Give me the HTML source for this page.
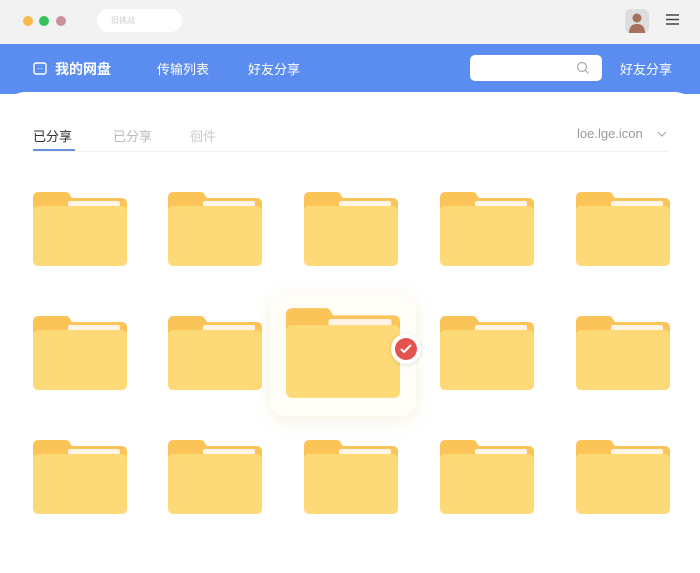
<!DOCTYPE html>
<html><head><meta charset="utf-8"><style>
body{margin:0;width:700px;height:573px;overflow:hidden;background:#fff;font-family:"Liberation Sans","Noto Sans CJK SC",sans-serif;position:relative}
.top{position:absolute;left:0;top:0;width:700px;height:44px;background:#f2f2f2}
.dot{position:absolute;top:16px;width:10px;height:10px;border-radius:50%}
.nav{position:absolute;left:0;top:44px;width:700px;height:50px;background:#5b8df0;color:#fff;font-size:13px}
.nav span{position:absolute;top:15px}
.main{position:absolute;left:0;top:92px;width:700px;height:481px;background:#fff;border-radius:26px 26px 0 0}
.f{position:absolute;width:94px;height:74px}
.tab{position:absolute;top:34px;font-size:13px}
</style></head><body>
<svg width="0" height="0" style="position:absolute"><defs>
<symbol id="fd" viewBox="0 0 94 74">
<path d="M0 5a5 5 0 0 1 5-5h28a5 5 0 0 1 4 3l2 3h50a5 5 0 0 1 5 5v50H0z" fill="#fbc458"/>
<rect x="35" y="9" width="52" height="12" rx="2" fill="#fdf4e6"/>
<rect x="0" y="14" width="94" height="60" rx="5" fill="#fdd977"/>
</symbol></defs></svg>
<div class="top">
<div class="dot" style="left:23px;background:#f9b84a"></div>
<div class="dot" style="left:39px;background:#31c35a"></div>
<div class="dot" style="left:56px;background:#c7929a"></div>
<div style="position:absolute;left:97px;top:9px;width:85px;height:23px;border-radius:12px;background:#fff;font-size:8px;color:#ccc;line-height:23px;padding-left:14px;box-sizing:border-box">旧挑战</div>
<div style="position:absolute;left:625px;top:9px;width:24px;height:24px;border-radius:5px;background:#ddd"><svg width="24" height="24"><circle cx="12" cy="9" r="4.5" fill="#a5705c"/><path d="M4 24c0-7 4-9 8-9s8 2 8 9z" fill="#a5705c"/></svg></div>
<svg style="position:absolute;left:665px;top:13px" width="15" height="13"><path d="M1 2h13M1 6.5h13M1 11h13" stroke="#444" stroke-width="1.4"/></svg>
</div>
<div class="nav">
<svg style="position:absolute;left:33px;top:18px" width="14" height="13"><rect x="1" y="1" width="12" height="11" rx="2" fill="none" stroke="#fff" stroke-width="1.4"/><path d="M5 6.5h1M8 6.5h1" stroke="#fff"/></svg>
<span style="left:55px;font-size:14px;font-weight:bold;top:15px">我的网盘</span>
<span style="left:157px">传输列表</span>
<span style="left:248px">好友分享</span>
<div style="position:absolute;left:470px;top:11px;width:132px;height:26px;background:#fff;border-radius:5px"><svg style="position:absolute;left:106px;top:6px" width="14" height="14"><circle cx="6" cy="6" r="4.5" fill="none" stroke="#aaa" stroke-width="1.2"/><path d="M9.5 9.5l3 3" stroke="#aaa" stroke-width="1.2"/></svg></div>
<span style="left:620px">好友分享</span>
</div>
<div class="main">
<span class="tab" style="left:33px;color:#333">已分享</span>
<div style="position:absolute;left:33px;top:57px;width:42px;height:2px;background:#6b8fe0"></div>
<span class="tab" style="left:113px;color:#bbb">已分享</span>
<span class="tab" style="left:190px;color:#ccc">徊件</span>
<span class="tab" style="left:577px;color:#999">loe.lge.icon</span>
<svg style="position:absolute;left:657px;top:39px" width="10" height="7"><path d="M1 1l4 4 4-4" fill="none" stroke="#aaa" stroke-width="1.2"/></svg>
<div style="position:absolute;left:33px;top:59px;width:635px;height:1px;background:#f2f2f2"></div>
</div>
<svg class="f" style="left:33px;top:192px"><use href="#fd"/></svg>
<svg class="f" style="left:168px;top:192px"><use href="#fd"/></svg>
<svg class="f" style="left:304px;top:192px"><use href="#fd"/></svg>
<svg class="f" style="left:440px;top:192px"><use href="#fd"/></svg>
<svg class="f" style="left:576px;top:192px"><use href="#fd"/></svg>
<svg class="f" style="left:33px;top:316px"><use href="#fd"/></svg>
<svg class="f" style="left:168px;top:316px"><use href="#fd"/></svg>
<div style="position:absolute;left:270px;top:292px;width:146px;height:124px;border-radius:14px;background:#fffdf8;box-shadow:0 4px 16px rgba(230,200,140,.25)"></div>
<svg style="position:absolute;left:286px;top:308px" width="114" height="90"><use href="#fd"/></svg>
<div style="position:absolute;left:391px;top:334px;width:30px;height:30px;border-radius:50%;background:#fff;box-shadow:0 1px 4px rgba(0,0,0,.12)"><div style="position:absolute;left:4px;top:4px;width:22px;height:22px;border-radius:50%;background:#e5534f"></div><svg style="position:absolute;left:9px;top:10px" width="12" height="10"><path d="M1 5l3 3 7-7" fill="none" stroke="#fff" stroke-width="2"/></svg></div>
<svg class="f" style="left:440px;top:316px"><use href="#fd"/></svg>
<svg class="f" style="left:576px;top:316px"><use href="#fd"/></svg>
<svg class="f" style="left:33px;top:440px"><use href="#fd"/></svg>
<svg class="f" style="left:168px;top:440px"><use href="#fd"/></svg>
<svg class="f" style="left:304px;top:440px"><use href="#fd"/></svg>
<svg class="f" style="left:440px;top:440px"><use href="#fd"/></svg>
<svg class="f" style="left:576px;top:440px"><use href="#fd"/></svg>
</body></html>
